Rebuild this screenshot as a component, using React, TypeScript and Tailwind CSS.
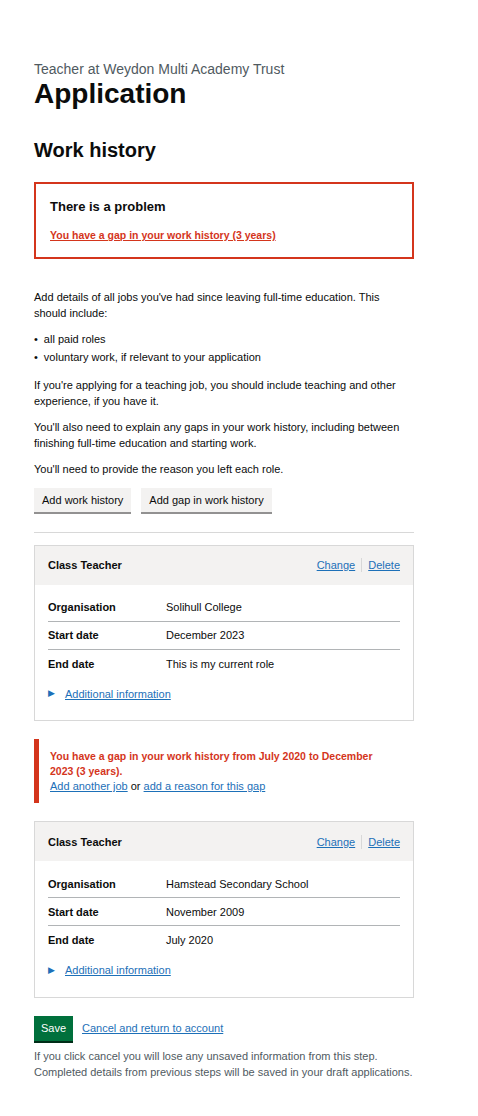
import React from 'react';

const Row = ({ label, value, last }: { label: string; value: string; last?: boolean }) => (
  <div className={`flex items-center h-[28px] ${last ? '' : 'border-b border-[#b1b4b6]'}`}>
    <div className="w-[118px] font-bold">{label}</div>
    <div>{value}</div>
  </div>
);

const JobCard = ({ org, start, end }: { org: string; start: string; end: string }) => (
  <div className="border border-[#d8d8d8]">
    <div className="bg-[#f3f2f1] h-[39px] px-[13px] flex items-center justify-between">
      <span className="font-bold text-[11px]">Class Teacher</span>
      <div className="flex items-center text-[11px] text-[#1d70b8]">
        <a className="underline">Change</a>
        <span className="mx-[6px] h-[14px] w-px bg-[#d8d8d8]" />
        <a className="underline">Delete</a>
      </div>
    </div>
    <div className="px-[13px] pt-[9px] pb-[18px] text-[11px] text-[#0b0c0c]">
      <Row label="Organisation" value={org} />
      <Row label="Start date" value={start} />
      <Row label="End date" value={end} last />
      <div className="flex items-center mt-[8px] text-[#1d70b8]">
        <span className="text-[9px] mr-[10px]">▶</span>
        <a className="underline">Additional information</a>
      </div>
    </div>
  </div>
);

export default function App() {
  return (
    <div className="min-h-screen bg-white text-[#0b0c0c]" style={{ fontFamily: '"Liberation Sans", Arial, sans-serif' }}>
      <div className="pl-[34px] w-[414px] pt-[61px] pb-[30px]">
        <p className="text-[14px] text-[#505a5f] leading-[17px]">Teacher at Weydon Multi Academy Trust</p>
        <h1 className="text-[28px] font-bold leading-[32px]">Application</h1>
        <h2 className="text-[20px] font-bold leading-[24px] mt-[28px]">Work history</h2>

        <div className="mt-[20px] border-2 border-[#d4351c] px-[14px] pt-[14px] pb-[13px]">
          <h3 className="text-[13px] font-bold leading-[18px]">There is a problem</h3>
          <a className="block mt-[12px] text-[10.5px] font-bold text-[#d4351c] underline">You have a gap in your work history (3 years)</a>
        </div>

        <div className="mt-[30px] text-[11px] leading-[16px]">
          <p>Add details of all jobs you've had since leaving full-time education. This should include:</p>
          <ul className="mt-[10px] space-y-[2px]">
            <li className="flex"><span className="mr-[6px]">•</span>all paid roles</li>
            <li className="flex"><span className="mr-[6px]">•</span>voluntary work, if relevant to your application</li>
          </ul>
          <p className="mt-[12px]">If you're applying for a teaching job, you should include teaching and other experience, if you have it.</p>
          <p className="mt-[10px]">You'll also need to explain any gaps in your work history, including between finishing full-time education and starting work.</p>
          <p className="mt-[10px]">You'll need to provide the reason you left each role.</p>
        </div>

        <div className="flex gap-[10px] mt-[11px]">
          <button className="bg-[#f3f2f1] shadow-[0_2px_0_#929191] h-[24px] px-[8px] text-[11px]">Add work history</button>
          <button className="bg-[#f3f2f1] shadow-[0_2px_0_#929191] h-[24px] px-[8px] text-[11px]">Add gap in work history</button>
        </div>

        <div className="mt-[20px] border-t border-[#d8d8d8]" />

        <div className="mt-[12px]">
          <JobCard org="Solihull College" start="December 2023" end="This is my current role" />
        </div>

        <div className="mt-[18px] border-l-[5px] border-[#d4351c] pl-[11px] pt-[10px] pb-[9px] leading-[15px]">
          <p className="font-bold text-[10.5px] text-[#d4351c] max-w-[340px]">You have a gap in your work history from July 2020 to December 2023 (3 years).</p>
          <p className="text-[11px]">
            <a className="text-[#1d70b8] underline">Add another job</a> or{' '}
            <a className="text-[#1d70b8] underline">add a reason for this gap</a>
          </p>
        </div>

        <div className="mt-[18px]">
          <JobCard org="Hamstead Secondary School" start="November 2009" end="July 2020" />
        </div>

        <div className="flex items-center mt-[18px]">
          <button className="bg-[#00703c] text-white text-[11px] h-[25px] w-[39px] shadow-[0_2px_0_#002d18]">Save</button>
          <a className="ml-[9px] text-[11px] text-[#1d70b8] underline">Cancel and return to account</a>
        </div>

        <p className="mt-[7px] text-[11px] leading-[16px] text-[#505a5f] whitespace-nowrap">
          If you click cancel you will lose any unsaved information from this step.
          <br />
          Completed details from previous steps will be saved in your draft applications.
        </p>
      </div>
    </div>
  );
}
